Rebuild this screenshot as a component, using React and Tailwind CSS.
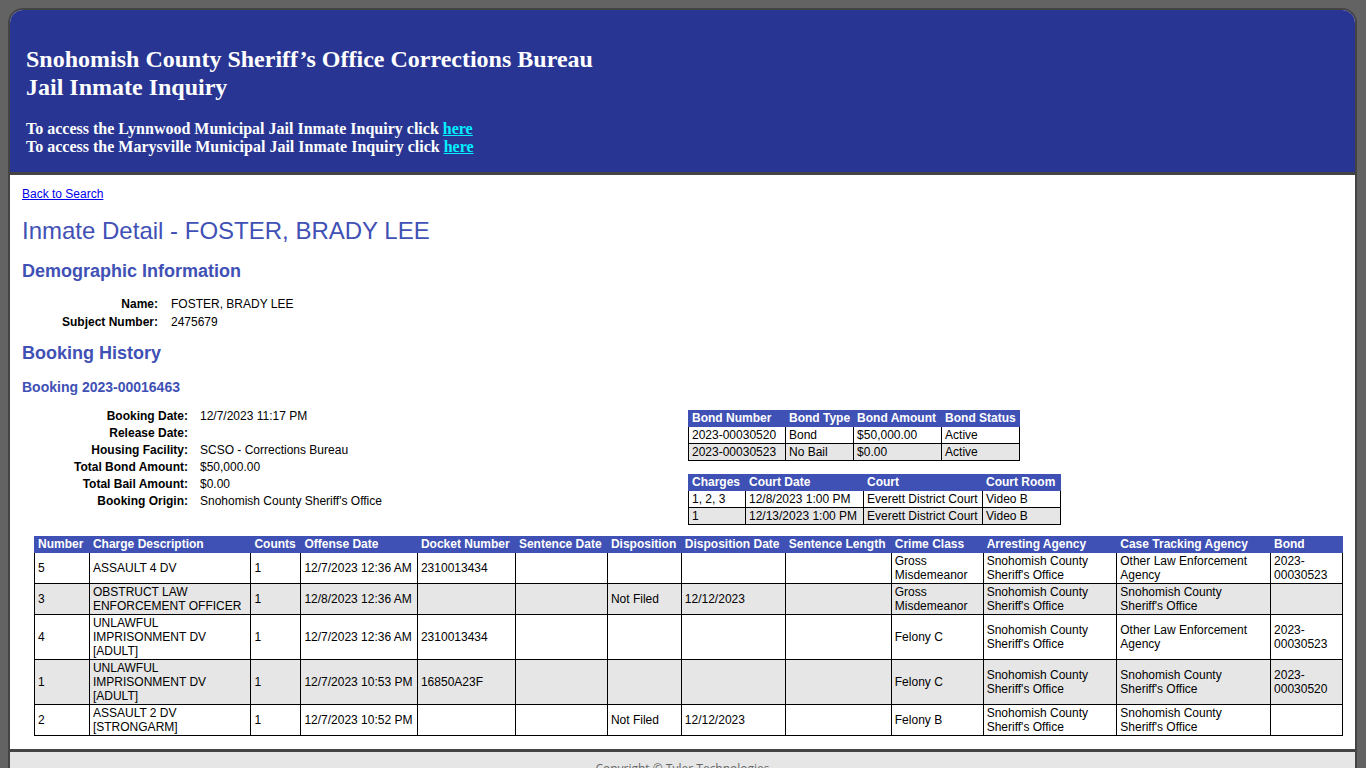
const charges = [
  ['5', 'ASSAULT 4 DV', '1', '12/7/2023 12:36 AM', '2310013434', '', '', '', '', 'Gross Misdemeanor', "Snohomish County Sheriff's Office", 'Other Law Enforcement Agency', '2023-00030523'],
  ['3', 'OBSTRUCT LAW ENFORCEMENT OFFICER', '1', '12/8/2023 12:36 AM', '', '', 'Not Filed', '12/12/2023', '', 'Gross Misdemeanor', "Snohomish County Sheriff's Office", "Snohomish County Sheriff's Office", ''],
  ['4', 'UNLAWFUL IMPRISONMENT DV [ADULT]', '1', '12/7/2023 12:36 AM', '2310013434', '', '', '', '', 'Felony C', "Snohomish County Sheriff's Office", 'Other Law Enforcement Agency', '2023-00030523'],
  ['1', 'UNLAWFUL IMPRISONMENT DV [ADULT]', '1', '12/7/2023 10:53 PM', '16850A23F', '', '', '', '', 'Felony C', "Snohomish County Sheriff's Office", "Snohomish County Sheriff's Office", '2023-00030520'],
  ['2', 'ASSAULT 2 DV [STRONGARM]', '1', '12/7/2023 10:52 PM', '', '', 'Not Filed', '12/12/2023', '', 'Felony B', "Snohomish County Sheriff's Office", "Snohomish County Sheriff's Office", ''],
];

const chargeCols = [
  ['Number', 55], ['Charge Description', 162], ['Counts', 50], ['Offense Date', 117],
  ['Docket Number', 98], ['Sentence Date', 92], ['Disposition', 74], ['Disposition Date', 104],
  ['Sentence Length', 106], ['Crime Class', 92], ['Arresting Agency', 134],
  ['Case Tracking Agency', 154], ['Bond', 72],
];

const bondCols = [['Bond Number', 97], ['Bond Type', 67], ['Bond Amount', 88], ['Bond Status', 77]];
const bonds = [
  ['2023-00030520', 'Bond', '$50,000.00', 'Active'],
  ['2023-00030523', 'No Bail', '$0.00', 'Active'],
];

const courtCols = [['Charges', 57], ['Court Date', 118], ['Court', 119], ['Court Room', 78]];
const courts = [
  ['1, 2, 3', '12/8/2023 1:00 PM', 'Everett District Court', 'Video B'],
  ['1', '12/13/2023 1:00 PM', 'Everett District Court', 'Video B'],
];

const bookingInfo = [
  ['Booking Date:', '12/7/2023 11:17 PM'],
  ['Release Date:', ''],
  ['Housing Facility:', 'SCSO - Corrections Bureau'],
  ['Total Bond Amount:', '$50,000.00'],
  ['Total Bail Amount:', '$0.00'],
  ['Booking Origin:', "Snohomish County Sheriff's Office"],
];

// plain bordered grid table, header row in indigo, zebra body rows
const DataTable = ({ cols, rows, className = '' }) => (
  <table className={'table-fixed border-collapse text-[12px] leading-[14px] ' + className}>
    <colgroup>
      {cols.map(([label, w]) => (
        <col key={label} style={{ width: w }} />
      ))}
    </colgroup>
    <thead>
      <tr>
        {cols.map(([label]) => (
          <th
            key={label}
            className="border border-[#3f51b5] bg-[#3f51b5] px-[3px] py-0 leading-[15px] text-left font-bold text-white whitespace-nowrap"
          >
            {label}
          </th>
        ))}
      </tr>
    </thead>
    <tbody>
      {rows.map((row, i) => (
        <tr key={i} className={i % 2 ? 'bg-[#e6e6e6]' : 'bg-white'}>
          {row.map((cell, j) => (
            <td key={j} className="border border-black px-[3px] py-px align-middle text-black">
              {cell}
            </td>
          ))}
        </tr>
      ))}
    </tbody>
  </table>
);

export default function App() {
  return (
    <div className="min-h-screen bg-[#636363] pt-2 font-['Liberation_Sans',Arial,sans-serif]">
      <div className="ml-2 mr-[9px] border-x-2 border-t-2 border-[#444] rounded-t-[15px] overflow-hidden bg-white">
        {/* Banner */}
        <div className="bg-[#283593] border-b-[3px] border-[#444] pl-4 pt-[35px] pb-4 font-['Liberation_Serif','Times_New_Roman',serif] font-bold text-white">
          <div className="text-[24px] leading-[28px]">
            Snohomish County Sheriff’s Office Corrections Bureau
            <br />
            Jail Inmate Inquiry
          </div>
          <div className="mt-[19px] text-[16px] leading-[18px]">
            To access the Lynnwood Municipal Jail Inmate Inquiry click{' '}
            <a href="#" className="text-[#00f0ff] underline">here</a>
            <br />
            To access the Marysville Municipal Jail Inmate Inquiry click{' '}
            <a href="#" className="text-[#00f0ff] underline">here</a>
          </div>
        </div>

        {/* Content */}
        <div className="px-3 pt-3 pb-[13px] text-black">
          <a href="#" className="block w-fit text-[12px] leading-[14px] text-[#0000ee] underline">
            Back to Search
          </a>

          <h1 className="mt-4 text-[24px] leading-[28px] text-[#3f51b5]">Inmate Detail - FOSTER, BRADY LEE</h1>

          <h2 className="mt-[15px] text-[18px] leading-[22px] font-bold text-[#3f51b5]">Demographic Information</h2>
          <div className="mt-[13px] grid grid-cols-[136px_1fr] gap-x-[13px] text-[12px] leading-[18px]">
            <div className="text-right font-bold">Name:</div>
            <div>FOSTER, BRADY LEE</div>
            <div className="text-right font-bold">Subject Number:</div>
            <div>2475679</div>
          </div>

          <h2 className="mt-[11px] text-[18px] leading-[22px] font-bold text-[#3f51b5]">Booking History</h2>
          <h3 className="mt-[14px] text-[14px] leading-[18px] font-bold text-[#3f51b5]">Booking 2023-00016463</h3>

          <div className="mt-3 grid grid-cols-[666px_1fr]">
            <div className="grid grid-cols-[166px_1fr] gap-x-3 content-start text-[12px] leading-[17px]">
              {bookingInfo.map(([k, v]) => (
                <div key={k} className="contents">
                  <div className="text-right font-bold">{k}</div>
                  <div>{v}</div>
                </div>
              ))}
            </div>
            <div className="pt-[2px]">
              <DataTable cols={bondCols} rows={bonds} />
              <DataTable cols={courtCols} rows={courts} className="mt-[13px]" />
            </div>
          </div>

          <DataTable cols={chargeCols} rows={charges} className="mt-[11px] ml-3" />
        </div>

        {/* Footer */}
        <div className="border-t-[3px] border-[#444] bg-[#e6e6e6] pt-[9px] pb-4 text-center font-['Open_Sans',sans-serif] text-[12px] leading-[16px] text-[#666]">
          Copyright © <a href="#" className="text-[#666]">Tyler Technologies</a>
        </div>
      </div>
    </div>
  );
}
